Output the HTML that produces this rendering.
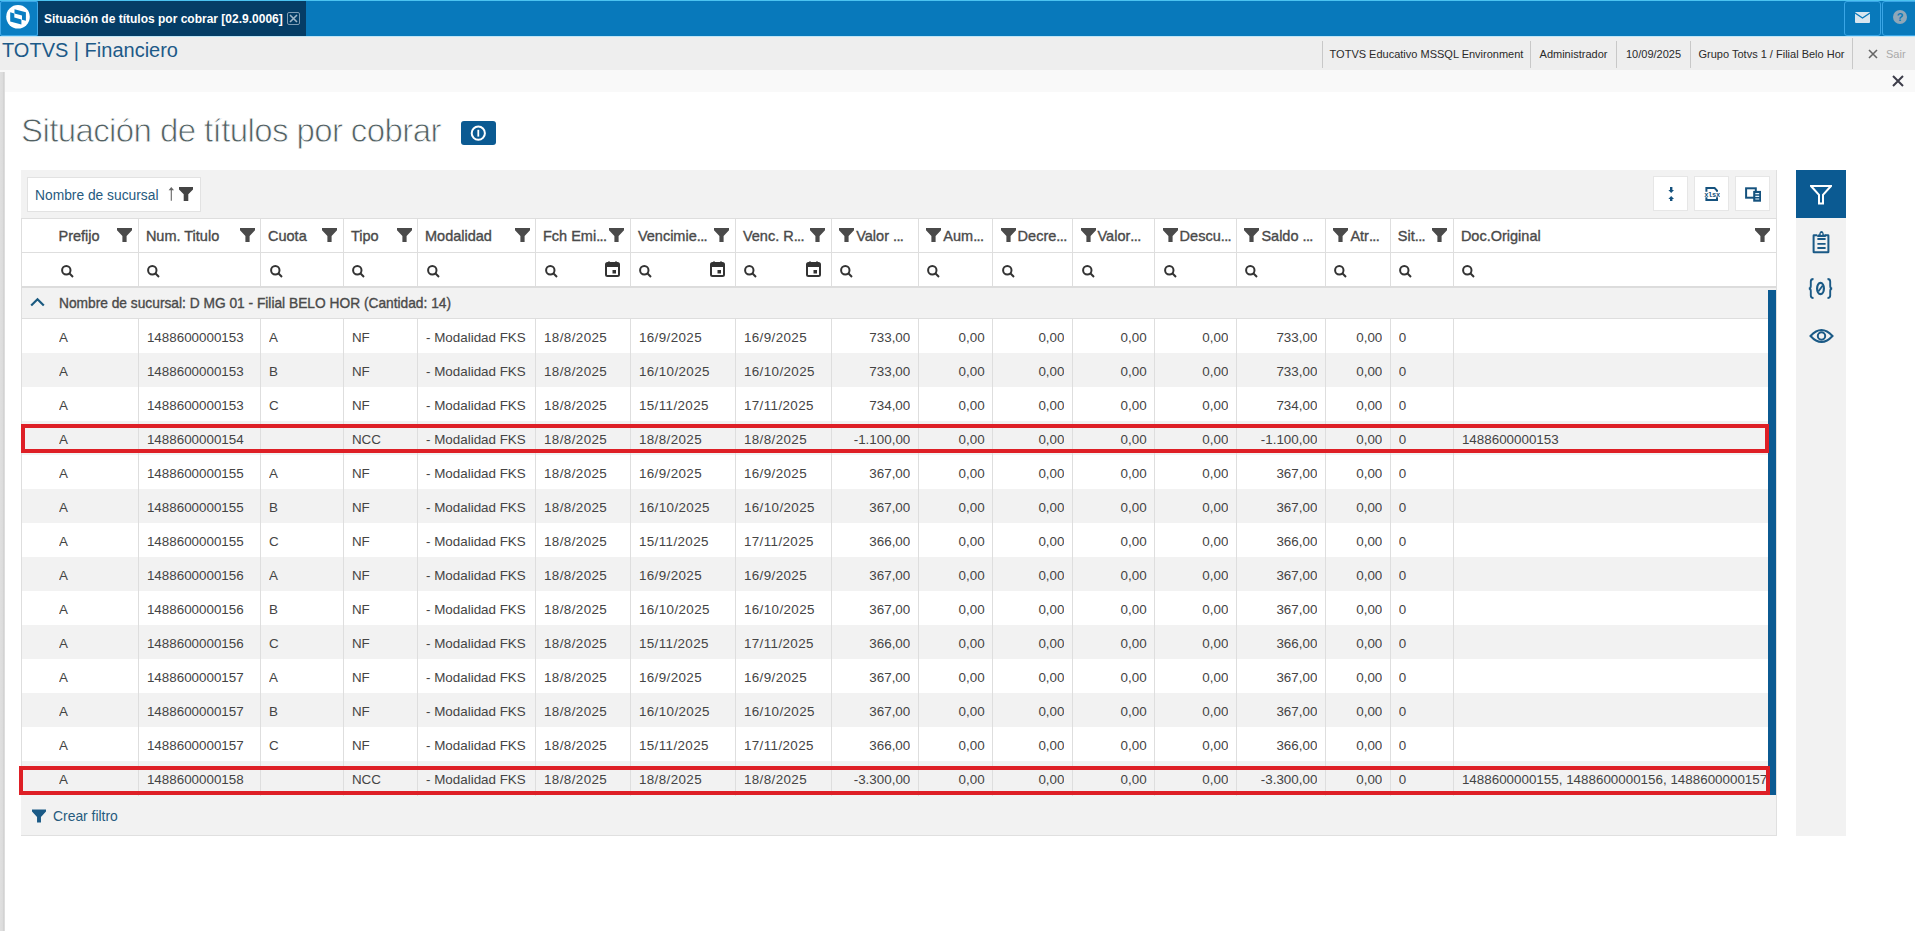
<!DOCTYPE html>
<html><head><meta charset="utf-8"><title>Situación de títulos por cobrar</title>
<style>
*{box-sizing:border-box;margin:0;padding:0}
html,body{width:1915px;height:931px;overflow:hidden;background:#fff;font-family:"Liberation Sans", sans-serif;color:#333}
.a{position:absolute}
.t{position:absolute;white-space:nowrap}
.cell{position:absolute;height:34px;line-height:37px;font-size:13.4px;color:#444;white-space:nowrap;overflow:hidden}
.hd{position:absolute;top:220px;height:33px;line-height:33px;font-size:14.5px;color:#4a4a4a;-webkit-text-stroke:0.35px #4a4a4a;white-space:nowrap}
.dots{letter-spacing:-0.6px}
.vl{position:absolute;width:1px;background:#dedede}
</style></head><body>

<div class="a" style="left:0;top:0;width:1915px;height:37px;background:#0879bb;border-top:1px solid #4cc3f0"></div>
<div class="a" style="left:0;top:1px;width:38px;height:35px;background:#0a7ec2;border:1px solid #3ea7e6;border-radius:2px"></div>
<svg class="a" style="left:0;top:0" width="38" height="37" viewBox="0 0 38 37"><circle cx="18" cy="16.8" r="11.8" fill="#fff"/><path d="M14.5 9.2L25.9 12.2L25.9 20.8L22 19.8L22 15.5L14.5 13.5Z" fill="#0a7ec2"/><path d="M10.2 12.3L14.3 13.4L14.3 17.6L21.4 19.5L21.4 24.5L10.2 21.6Z" fill="#0a7ec2"/></svg>
<div class="a" style="left:38px;top:1px;width:268px;height:36px;background:#053d66"></div>
<div class="t" style="left:44px;top:11px;font-size:12px;font-weight:bold;color:#fff;line-height:17px">Situación de títulos por cobrar [02.9.0006]</div>
<div class="a" style="left:287px;top:12px;width:13px;height:13px;border:1px solid #7f9db5;border-radius:2px"></div>
<svg class="a" style="left:289px;top:14px" width="9" height="9" viewBox="0 0 9 9"><path d="M1 1L8 8M8 1L1 8" stroke="#9fb6c8" stroke-width="1.6"/></svg>
<div class="a" style="left:0;top:36px;width:1915px;height:1px;background:#bfe6f7"></div>
<div class="a" style="left:1844px;top:1px;width:37px;height:35px;border:1px solid #3aa6e6;border-radius:3px"></div>
<div class="a" style="left:1882px;top:1px;width:40px;height:35px;border:1px solid #3aa6e6;border-radius:3px"></div>
<svg class="a" style="left:1855px;top:12px" width="15" height="11" viewBox="0 0 15 11"><rect x="0" y="0" width="15" height="11" rx="1" fill="#d9e6ef"/><path d="M0 1L7.5 6L15 1" fill="none" stroke="#0879bb" stroke-width="1.4"/></svg>
<div class="a" style="left:1893px;top:10px;width:14px;height:14px;border-radius:50%;background:#8fa7b8;color:#0879bb;font-size:11px;font-weight:bold;line-height:14px;text-align:center">?</div>
<div class="a" style="left:0;top:37px;width:1915px;height:33px;background:#eeeeee"></div>
<div class="t" style="left:2px;top:38px;font-size:20px;color:#1d5a88;line-height:24px">TOTVS | Financiero</div>
<div class="a" style="left:1322px;top:41px;width:1px;height:27px;background:#c8c8c8"></div>
<div class="t" style="left:1323px;top:46px;width:207px;text-align:center;font-size:11px;color:#2a2a2a;line-height:16px">TOTVS Educativo MSSQL Environment</div>
<div class="a" style="left:1530px;top:41px;width:1px;height:27px;background:#c8c8c8"></div>
<div class="t" style="left:1531px;top:46px;width:85px;text-align:center;font-size:11px;color:#2a2a2a;line-height:16px">Administrador</div>
<div class="a" style="left:1616px;top:41px;width:1px;height:27px;background:#c8c8c8"></div>
<div class="t" style="left:1617px;top:46px;width:73px;text-align:center;font-size:11px;color:#2a2a2a;line-height:16px">10/09/2025</div>
<div class="a" style="left:1690px;top:41px;width:1px;height:27px;background:#c8c8c8"></div>
<div class="t" style="left:1691px;top:46px;width:161px;text-align:center;font-size:11px;color:#2a2a2a;line-height:16px">Grupo Totvs 1 / Filial Belo Hor</div>
<div class="a" style="left:1852px;top:38px;width:1px;height:31px;background:#c8c8c8"></div>
<svg class="a" style="left:1868px;top:49px" width="10" height="10" viewBox="0 0 10 10"><path d="M1 1L9 9M9 1L1 9" stroke="#666" stroke-width="1.6"/></svg>
<div class="t" style="left:1886px;top:46px;font-size:11px;color:#aaa;line-height:16px">Sair</div>
<div class="a" style="left:0;top:70px;width:1915px;height:22px;background:#f9f9f9"></div>
<div class="a" style="left:0;top:72px;width:5px;height:859px;background:linear-gradient(to right,#e0e0e0 0,#dcdcdc 50%,#cecece 80%,#ececec 100%)"></div>
<svg class="a" style="left:1892px;top:75px" width="12" height="12" viewBox="0 0 12 12"><path d="M1 1L11 11M11 1L1 11" stroke="#3d3d4a" stroke-width="2"/></svg>
<div class="t" style="left:21px;top:111px;font-size:33px;color:#526163;line-height:40px;letter-spacing:-0.6px;-webkit-text-stroke:0.8px #fff">Situación de títulos por cobrar</div>
<div class="a" style="left:461px;top:121px;width:35px;height:24px;background:#0b5a92;border-radius:3px"></div>
<svg class="a" style="left:470px;top:125px" width="17" height="17" viewBox="0 0 17 17"><circle cx="8.3" cy="8.2" r="6.6" fill="none" stroke="#fff" stroke-width="2"/><rect x="7.4" y="4.8" width="1.8" height="6.8" fill="#fff"/></svg>
<div class="a" style="left:21px;top:170px;width:1756px;height:666px;background:#f2f2f2;border-right:1px solid #e0e0e0;border-bottom:1px solid #e0e0e0"></div>
<div class="a" style="left:27px;top:177px;width:174px;height:35px;background:#fff;border:1px solid #e2e2e2"></div>
<div class="t" style="left:35px;top:187px;font-size:13.8px;color:#265a7e;line-height:18px">Nombre de sucursal</div>
<svg class="a" style="left:167px;top:187px" width="8" height="14" viewBox="0 0 8 14"><path d="M4.3 13.8V2.5" stroke="#666" stroke-width="1.1"/><path d="M4.3 0L7 3.3H1.6Z" fill="#666"/></svg>
<svg class="a" style="left:179px;top:187px" width="14" height="14" viewBox="0 0 14 14"><path d="M0 0H14V2.6L9.3 7.2V14H4.7V7.2L0 2.6Z" fill="#444"/></svg>
<div class="a" style="left:1653px;top:176px;width:35px;height:35px;background:#fff;border:1px solid #e6e6e6"></div>
<div class="a" style="left:1694px;top:176px;width:35px;height:35px;background:#fff;border:1px solid #e6e6e6"></div>
<div class="a" style="left:1735px;top:176px;width:35px;height:35px;background:#fff;border:1px solid #e6e6e6"></div>
<svg class="a" style="left:1665px;top:186px" width="12" height="16" viewBox="0 0 12 16"><rect x="5" y="1" width="2.4" height="3.2" fill="#15527e"/><path d="M3.4 4H9L6.2 7Z" fill="#15527e"/><path d="M3.4 13H9L6.2 10Z" fill="#15527e"/><rect x="5" y="12.8" width="2.4" height="2.2" fill="#15527e"/></svg>
<svg class="a" style="left:1704px;top:186px" width="16" height="16" viewBox="0 0 16 16"><path d="M2.4 5.8V2H10.6L13 4.6V5.8" fill="none" stroke="#15527e" stroke-width="2"/><path d="M2.4 11.2V14H13V11.2" fill="none" stroke="#15527e" stroke-width="2"/><text x="8" y="10.8" font-size="7" font-weight="bold" text-anchor="middle" fill="#15527e" font-family="Liberation Mono" letter-spacing="-0.3">xlsx</text></svg>
<svg class="a" style="left:1744px;top:186px" width="18" height="17" viewBox="0 0 18 17"><rect x="2.1" y="2.3" width="9.7" height="9.4" fill="none" stroke="#15527e" stroke-width="2"/><rect x="9.2" y="4.9" width="7.8" height="10.8" fill="#15527e"/><path d="M11.3 7.6H15.2M11.3 10.3H15.2M11.3 13H15.2" stroke="#e8f6ff" stroke-width="1.2"/></svg>
<div class="a" style="left:21px;top:218px;width:1756px;height:70px;background:#fff;border:1px solid #dedede;border-bottom:2px solid #dcdcdc"></div>
<div class="a" style="left:22px;top:252px;width:1754px;height:1px;background:#dedede"></div>
<div class="vl" style="left:138px;top:219px;height:67px"></div>
<div class="vl" style="left:260px;top:219px;height:67px"></div>
<div class="vl" style="left:343px;top:219px;height:67px"></div>
<div class="vl" style="left:417px;top:219px;height:67px"></div>
<div class="vl" style="left:535px;top:219px;height:67px"></div>
<div class="vl" style="left:630px;top:219px;height:67px"></div>
<div class="vl" style="left:735px;top:219px;height:67px"></div>
<div class="vl" style="left:831px;top:219px;height:67px"></div>
<div class="vl" style="left:918px;top:219px;height:67px"></div>
<div class="vl" style="left:992px;top:219px;height:67px"></div>
<div class="vl" style="left:1072px;top:219px;height:67px"></div>
<div class="vl" style="left:1154px;top:219px;height:67px"></div>
<div class="vl" style="left:1236px;top:219px;height:67px"></div>
<div class="vl" style="left:1325px;top:219px;height:67px"></div>
<div class="vl" style="left:1390px;top:219px;height:67px"></div>
<div class="vl" style="left:1453px;top:219px;height:67px"></div>
<div class="hd" style="left:58.5px">Prefijo</div>
<div class="a" style="left:117.4px;top:228px"><svg class="fun" width="15" height="14" viewBox="0 0 15 14"><path d="M0 0H15V2.2L9.6 8V14H5.4V8L0 2.2Z" fill="#4a4a4a"/></svg></div>
<div class="hd" style="left:145.9px">Num. Titulo</div>
<div class="a" style="left:239.5px;top:228px"><svg class="fun" width="15" height="14" viewBox="0 0 15 14"><path d="M0 0H15V2.2L9.6 8V14H5.4V8L0 2.2Z" fill="#4a4a4a"/></svg></div>
<div class="hd" style="left:268.0px">Cuota</div>
<div class="a" style="left:322.4px;top:228px"><svg class="fun" width="15" height="14" viewBox="0 0 15 14"><path d="M0 0H15V2.2L9.6 8V14H5.4V8L0 2.2Z" fill="#4a4a4a"/></svg></div>
<div class="hd" style="left:350.9px">Tipo</div>
<div class="a" style="left:396.5px;top:228px"><svg class="fun" width="15" height="14" viewBox="0 0 15 14"><path d="M0 0H15V2.2L9.6 8V14H5.4V8L0 2.2Z" fill="#4a4a4a"/></svg></div>
<div class="hd" style="left:425.0px">Modalidad</div>
<div class="a" style="left:514.5px;top:228px"><svg class="fun" width="15" height="14" viewBox="0 0 15 14"><path d="M0 0H15V2.2L9.6 8V14H5.4V8L0 2.2Z" fill="#4a4a4a"/></svg></div>
<div class="hd" style="left:543.0px">Fch Emi<span class="dots">...</span></div>
<div class="a" style="left:609.4px;top:228px"><svg class="fun" width="15" height="14" viewBox="0 0 15 14"><path d="M0 0H15V2.2L9.6 8V14H5.4V8L0 2.2Z" fill="#4a4a4a"/></svg></div>
<div class="hd" style="left:637.9px">Vencimie<span class="dots">...</span></div>
<div class="a" style="left:714.4px;top:228px"><svg class="fun" width="15" height="14" viewBox="0 0 15 14"><path d="M0 0H15V2.2L9.6 8V14H5.4V8L0 2.2Z" fill="#4a4a4a"/></svg></div>
<div class="hd" style="left:742.9px">Venc. R<span class="dots">...</span></div>
<div class="a" style="left:810.2px;top:228px"><svg class="fun" width="15" height="14" viewBox="0 0 15 14"><path d="M0 0H15V2.2L9.6 8V14H5.4V8L0 2.2Z" fill="#4a4a4a"/></svg></div>
<div class="a" style="left:839.2px;top:228px"><svg class="fun" width="15" height="14" viewBox="0 0 15 14"><path d="M0 0H15V2.2L9.6 8V14H5.4V8L0 2.2Z" fill="#4a4a4a"/></svg></div>
<div class="hd" style="left:856.2px">Valor <span class="dots">...</span></div>
<div class="a" style="left:926.3px;top:228px"><svg class="fun" width="15" height="14" viewBox="0 0 15 14"><path d="M0 0H15V2.2L9.6 8V14H5.4V8L0 2.2Z" fill="#4a4a4a"/></svg></div>
<div class="hd" style="left:943.3px">Aum<span class="dots">...</span></div>
<div class="a" style="left:1000.6px;top:228px"><svg class="fun" width="15" height="14" viewBox="0 0 15 14"><path d="M0 0H15V2.2L9.6 8V14H5.4V8L0 2.2Z" fill="#4a4a4a"/></svg></div>
<div class="hd" style="left:1017.6px">Decre<span class="dots">...</span></div>
<div class="a" style="left:1080.5px;top:228px"><svg class="fun" width="15" height="14" viewBox="0 0 15 14"><path d="M0 0H15V2.2L9.6 8V14H5.4V8L0 2.2Z" fill="#4a4a4a"/></svg></div>
<div class="hd" style="left:1097.5px">Valor<span class="dots">...</span></div>
<div class="a" style="left:1162.6px;top:228px"><svg class="fun" width="15" height="14" viewBox="0 0 15 14"><path d="M0 0H15V2.2L9.6 8V14H5.4V8L0 2.2Z" fill="#4a4a4a"/></svg></div>
<div class="hd" style="left:1179.6px">Descu<span class="dots">...</span></div>
<div class="a" style="left:1244.4px;top:228px"><svg class="fun" width="15" height="14" viewBox="0 0 15 14"><path d="M0 0H15V2.2L9.6 8V14H5.4V8L0 2.2Z" fill="#4a4a4a"/></svg></div>
<div class="hd" style="left:1261.4px">Saldo <span class="dots">...</span></div>
<div class="a" style="left:1333.4px;top:228px"><svg class="fun" width="15" height="14" viewBox="0 0 15 14"><path d="M0 0H15V2.2L9.6 8V14H5.4V8L0 2.2Z" fill="#4a4a4a"/></svg></div>
<div class="hd" style="left:1350.4px">Atr<span class="dots">...</span></div>
<div class="hd" style="left:1397.8px">Sit<span class="dots">...</span></div>
<div class="a" style="left:1432.4px;top:228px"><svg class="fun" width="15" height="14" viewBox="0 0 15 14"><path d="M0 0H15V2.2L9.6 8V14H5.4V8L0 2.2Z" fill="#4a4a4a"/></svg></div>
<div class="hd" style="left:1460.9px">Doc.Original</div>
<div class="a" style="left:1755px;top:228px"><svg class="fun" width="15" height="14" viewBox="0 0 15 14"><path d="M0 0H15V2.2L9.6 8V14H5.4V8L0 2.2Z" fill="#4a4a4a"/></svg></div>
<div class="a" style="left:61px;top:264px;height:13px"><svg width="13" height="13" viewBox="0 0 13 13"><circle cx="5.3" cy="5.3" r="4.2" fill="none" stroke="#333" stroke-width="2"/><path d="M8.3 8.3L12 12" stroke="#333" stroke-width="2"/></svg></div>
<div class="a" style="left:147.4px;top:264px;height:13px"><svg width="13" height="13" viewBox="0 0 13 13"><circle cx="5.3" cy="5.3" r="4.2" fill="none" stroke="#333" stroke-width="2"/><path d="M8.3 8.3L12 12" stroke="#333" stroke-width="2"/></svg></div>
<div class="a" style="left:269.5px;top:264px;height:13px"><svg width="13" height="13" viewBox="0 0 13 13"><circle cx="5.3" cy="5.3" r="4.2" fill="none" stroke="#333" stroke-width="2"/><path d="M8.3 8.3L12 12" stroke="#333" stroke-width="2"/></svg></div>
<div class="a" style="left:352.4px;top:264px;height:13px"><svg width="13" height="13" viewBox="0 0 13 13"><circle cx="5.3" cy="5.3" r="4.2" fill="none" stroke="#333" stroke-width="2"/><path d="M8.3 8.3L12 12" stroke="#333" stroke-width="2"/></svg></div>
<div class="a" style="left:426.5px;top:264px;height:13px"><svg width="13" height="13" viewBox="0 0 13 13"><circle cx="5.3" cy="5.3" r="4.2" fill="none" stroke="#333" stroke-width="2"/><path d="M8.3 8.3L12 12" stroke="#333" stroke-width="2"/></svg></div>
<div class="a" style="left:544.5px;top:264px;height:13px"><svg width="13" height="13" viewBox="0 0 13 13"><circle cx="5.3" cy="5.3" r="4.2" fill="none" stroke="#333" stroke-width="2"/><path d="M8.3 8.3L12 12" stroke="#333" stroke-width="2"/></svg></div>
<div class="a" style="left:639.4px;top:264px;height:13px"><svg width="13" height="13" viewBox="0 0 13 13"><circle cx="5.3" cy="5.3" r="4.2" fill="none" stroke="#333" stroke-width="2"/><path d="M8.3 8.3L12 12" stroke="#333" stroke-width="2"/></svg></div>
<div class="a" style="left:744.4px;top:264px;height:13px"><svg width="13" height="13" viewBox="0 0 13 13"><circle cx="5.3" cy="5.3" r="4.2" fill="none" stroke="#333" stroke-width="2"/><path d="M8.3 8.3L12 12" stroke="#333" stroke-width="2"/></svg></div>
<div class="a" style="left:840.2px;top:264px;height:13px"><svg width="13" height="13" viewBox="0 0 13 13"><circle cx="5.3" cy="5.3" r="4.2" fill="none" stroke="#333" stroke-width="2"/><path d="M8.3 8.3L12 12" stroke="#333" stroke-width="2"/></svg></div>
<div class="a" style="left:927.3px;top:264px;height:13px"><svg width="13" height="13" viewBox="0 0 13 13"><circle cx="5.3" cy="5.3" r="4.2" fill="none" stroke="#333" stroke-width="2"/><path d="M8.3 8.3L12 12" stroke="#333" stroke-width="2"/></svg></div>
<div class="a" style="left:1001.6px;top:264px;height:13px"><svg width="13" height="13" viewBox="0 0 13 13"><circle cx="5.3" cy="5.3" r="4.2" fill="none" stroke="#333" stroke-width="2"/><path d="M8.3 8.3L12 12" stroke="#333" stroke-width="2"/></svg></div>
<div class="a" style="left:1081.5px;top:264px;height:13px"><svg width="13" height="13" viewBox="0 0 13 13"><circle cx="5.3" cy="5.3" r="4.2" fill="none" stroke="#333" stroke-width="2"/><path d="M8.3 8.3L12 12" stroke="#333" stroke-width="2"/></svg></div>
<div class="a" style="left:1163.6px;top:264px;height:13px"><svg width="13" height="13" viewBox="0 0 13 13"><circle cx="5.3" cy="5.3" r="4.2" fill="none" stroke="#333" stroke-width="2"/><path d="M8.3 8.3L12 12" stroke="#333" stroke-width="2"/></svg></div>
<div class="a" style="left:1245.4px;top:264px;height:13px"><svg width="13" height="13" viewBox="0 0 13 13"><circle cx="5.3" cy="5.3" r="4.2" fill="none" stroke="#333" stroke-width="2"/><path d="M8.3 8.3L12 12" stroke="#333" stroke-width="2"/></svg></div>
<div class="a" style="left:1334.4px;top:264px;height:13px"><svg width="13" height="13" viewBox="0 0 13 13"><circle cx="5.3" cy="5.3" r="4.2" fill="none" stroke="#333" stroke-width="2"/><path d="M8.3 8.3L12 12" stroke="#333" stroke-width="2"/></svg></div>
<div class="a" style="left:1399.3px;top:264px;height:13px"><svg width="13" height="13" viewBox="0 0 13 13"><circle cx="5.3" cy="5.3" r="4.2" fill="none" stroke="#333" stroke-width="2"/><path d="M8.3 8.3L12 12" stroke="#333" stroke-width="2"/></svg></div>
<div class="a" style="left:1462.4px;top:264px;height:13px"><svg width="13" height="13" viewBox="0 0 13 13"><circle cx="5.3" cy="5.3" r="4.2" fill="none" stroke="#333" stroke-width="2"/><path d="M8.3 8.3L12 12" stroke="#333" stroke-width="2"/></svg></div>
<div class="a" style="left:605.4px;top:261px;height:16px"><svg width="15" height="16" viewBox="0 0 15 16"><path d="M1 3.5Q1 2 2.5 2H12.5Q14 2 14 3.5V13.5Q14 15 12.5 15H2.5Q1 15 1 13.5Z" fill="none" stroke="#333" stroke-width="2"/><rect x="1" y="2" width="13" height="4" fill="#333"/><rect x="3" y="0.5" width="2" height="2" fill="#333"/><rect x="10" y="0.5" width="2" height="2" fill="#333"/><rect x="7.5" y="9" width="3.5" height="3.5" fill="#333"/></svg></div>
<div class="a" style="left:710.4px;top:261px;height:16px"><svg width="15" height="16" viewBox="0 0 15 16"><path d="M1 3.5Q1 2 2.5 2H12.5Q14 2 14 3.5V13.5Q14 15 12.5 15H2.5Q1 15 1 13.5Z" fill="none" stroke="#333" stroke-width="2"/><rect x="1" y="2" width="13" height="4" fill="#333"/><rect x="3" y="0.5" width="2" height="2" fill="#333"/><rect x="10" y="0.5" width="2" height="2" fill="#333"/><rect x="7.5" y="9" width="3.5" height="3.5" fill="#333"/></svg></div>
<div class="a" style="left:806.2px;top:261px;height:16px"><svg width="15" height="16" viewBox="0 0 15 16"><path d="M1 3.5Q1 2 2.5 2H12.5Q14 2 14 3.5V13.5Q14 15 12.5 15H2.5Q1 15 1 13.5Z" fill="none" stroke="#333" stroke-width="2"/><rect x="1" y="2" width="13" height="4" fill="#333"/><rect x="3" y="0.5" width="2" height="2" fill="#333"/><rect x="10" y="0.5" width="2" height="2" fill="#333"/><rect x="7.5" y="9" width="3.5" height="3.5" fill="#333"/></svg></div>
<div class="a" style="left:21px;top:288px;width:1747px;height:31px;background:#f2f2f2;border-left:1px solid #dedede;border-bottom:1px solid #dedede"></div>
<svg class="a" style="left:30px;top:297px" width="15" height="10" viewBox="0 0 15 10"><path d="M1.2 8.5L7.5 2.2L13.8 8.5" fill="none" stroke="#1a5a80" stroke-width="2.2"/></svg>
<div class="t" style="left:59px;top:295px;font-size:13.75px;color:#4a4a4a;-webkit-text-stroke:0.35px #4a4a4a;line-height:18px">Nombre de sucursal: D MG 01 - Filial BELO HOR (Cantidad: 14)</div>
<div class="a" style="left:21px;top:319px;width:1747px;height:34px;background:#ffffff;border-left:1px solid #dedede"></div>
<div class="cell" style="left:59px;top:319px;width:79.4px">A</div>
<div class="cell" style="left:146.9px;top:319px;width:113.6px">1488600000153</div>
<div class="cell" style="left:269.0px;top:319px;width:74.4px">A</div>
<div class="cell" style="left:351.9px;top:319px;width:65.6px">NF</div>
<div class="cell" style="left:426.0px;top:319px;width:109.5px">- Modalidad FKS</div>
<div class="cell" style="left:544.0px;top:319px;width:86.4px;letter-spacing:0.4px">18/8/2025</div>
<div class="cell" style="left:638.9px;top:319px;width:96.5px;letter-spacing:0.4px">16/9/2025</div>
<div class="cell" style="left:743.9px;top:319px;width:87.3px;letter-spacing:0.4px">16/9/2025</div>
<div class="cell" style="left:831.2px;top:319px;width:79.09999999999991px;text-align:right">733,00</div>
<div class="cell" style="left:918.3px;top:319px;width:66.30000000000007px;text-align:right">0,00</div>
<div class="cell" style="left:992.6px;top:319px;width:71.89999999999998px;text-align:right">0,00</div>
<div class="cell" style="left:1072.5px;top:319px;width:74.09999999999991px;text-align:right">0,00</div>
<div class="cell" style="left:1154.6px;top:319px;width:73.80000000000018px;text-align:right">0,00</div>
<div class="cell" style="left:1236.4px;top:319px;width:81.0px;text-align:right">733,00</div>
<div class="cell" style="left:1325.4px;top:319px;width:56.899999999999864px;text-align:right">0,00</div>
<div class="cell" style="left:1398.8px;top:319px;width:54.6px">0</div>
<div class="a" style="left:21px;top:353px;width:1747px;height:34px;background:#f2f2f2;border-left:1px solid #dedede"></div>
<div class="cell" style="left:59px;top:353px;width:79.4px">A</div>
<div class="cell" style="left:146.9px;top:353px;width:113.6px">1488600000153</div>
<div class="cell" style="left:269.0px;top:353px;width:74.4px">B</div>
<div class="cell" style="left:351.9px;top:353px;width:65.6px">NF</div>
<div class="cell" style="left:426.0px;top:353px;width:109.5px">- Modalidad FKS</div>
<div class="cell" style="left:544.0px;top:353px;width:86.4px;letter-spacing:0.4px">18/8/2025</div>
<div class="cell" style="left:638.9px;top:353px;width:96.5px;letter-spacing:0.4px">16/10/2025</div>
<div class="cell" style="left:743.9px;top:353px;width:87.3px;letter-spacing:0.4px">16/10/2025</div>
<div class="cell" style="left:831.2px;top:353px;width:79.09999999999991px;text-align:right">733,00</div>
<div class="cell" style="left:918.3px;top:353px;width:66.30000000000007px;text-align:right">0,00</div>
<div class="cell" style="left:992.6px;top:353px;width:71.89999999999998px;text-align:right">0,00</div>
<div class="cell" style="left:1072.5px;top:353px;width:74.09999999999991px;text-align:right">0,00</div>
<div class="cell" style="left:1154.6px;top:353px;width:73.80000000000018px;text-align:right">0,00</div>
<div class="cell" style="left:1236.4px;top:353px;width:81.0px;text-align:right">733,00</div>
<div class="cell" style="left:1325.4px;top:353px;width:56.899999999999864px;text-align:right">0,00</div>
<div class="cell" style="left:1398.8px;top:353px;width:54.6px">0</div>
<div class="a" style="left:21px;top:387px;width:1747px;height:34px;background:#ffffff;border-left:1px solid #dedede"></div>
<div class="cell" style="left:59px;top:387px;width:79.4px">A</div>
<div class="cell" style="left:146.9px;top:387px;width:113.6px">1488600000153</div>
<div class="cell" style="left:269.0px;top:387px;width:74.4px">C</div>
<div class="cell" style="left:351.9px;top:387px;width:65.6px">NF</div>
<div class="cell" style="left:426.0px;top:387px;width:109.5px">- Modalidad FKS</div>
<div class="cell" style="left:544.0px;top:387px;width:86.4px;letter-spacing:0.4px">18/8/2025</div>
<div class="cell" style="left:638.9px;top:387px;width:96.5px;letter-spacing:0.4px">15/11/2025</div>
<div class="cell" style="left:743.9px;top:387px;width:87.3px;letter-spacing:0.4px">17/11/2025</div>
<div class="cell" style="left:831.2px;top:387px;width:79.09999999999991px;text-align:right">734,00</div>
<div class="cell" style="left:918.3px;top:387px;width:66.30000000000007px;text-align:right">0,00</div>
<div class="cell" style="left:992.6px;top:387px;width:71.89999999999998px;text-align:right">0,00</div>
<div class="cell" style="left:1072.5px;top:387px;width:74.09999999999991px;text-align:right">0,00</div>
<div class="cell" style="left:1154.6px;top:387px;width:73.80000000000018px;text-align:right">0,00</div>
<div class="cell" style="left:1236.4px;top:387px;width:81.0px;text-align:right">734,00</div>
<div class="cell" style="left:1325.4px;top:387px;width:56.899999999999864px;text-align:right">0,00</div>
<div class="cell" style="left:1398.8px;top:387px;width:54.6px">0</div>
<div class="a" style="left:21px;top:421px;width:1747px;height:34px;background:#f2f2f2;border-left:1px solid #dedede"></div>
<div class="cell" style="left:59px;top:421px;width:79.4px">A</div>
<div class="cell" style="left:146.9px;top:421px;width:113.6px">1488600000154</div>
<div class="cell" style="left:351.9px;top:421px;width:65.6px">NCC</div>
<div class="cell" style="left:426.0px;top:421px;width:109.5px">- Modalidad FKS</div>
<div class="cell" style="left:544.0px;top:421px;width:86.4px;letter-spacing:0.4px">18/8/2025</div>
<div class="cell" style="left:638.9px;top:421px;width:96.5px;letter-spacing:0.4px">18/8/2025</div>
<div class="cell" style="left:743.9px;top:421px;width:87.3px;letter-spacing:0.4px">18/8/2025</div>
<div class="cell" style="left:831.2px;top:421px;width:79.09999999999991px;text-align:right">-1.100,00</div>
<div class="cell" style="left:918.3px;top:421px;width:66.30000000000007px;text-align:right">0,00</div>
<div class="cell" style="left:992.6px;top:421px;width:71.89999999999998px;text-align:right">0,00</div>
<div class="cell" style="left:1072.5px;top:421px;width:74.09999999999991px;text-align:right">0,00</div>
<div class="cell" style="left:1154.6px;top:421px;width:73.80000000000018px;text-align:right">0,00</div>
<div class="cell" style="left:1236.4px;top:421px;width:81.0px;text-align:right">-1.100,00</div>
<div class="cell" style="left:1325.4px;top:421px;width:56.899999999999864px;text-align:right">0,00</div>
<div class="cell" style="left:1398.8px;top:421px;width:54.6px">0</div>
<div class="cell" style="left:1461.9px;top:421px;width:304.1px">1488600000153</div>
<div class="a" style="left:21px;top:455px;width:1747px;height:34px;background:#ffffff;border-left:1px solid #dedede"></div>
<div class="cell" style="left:59px;top:455px;width:79.4px">A</div>
<div class="cell" style="left:146.9px;top:455px;width:113.6px">1488600000155</div>
<div class="cell" style="left:269.0px;top:455px;width:74.4px">A</div>
<div class="cell" style="left:351.9px;top:455px;width:65.6px">NF</div>
<div class="cell" style="left:426.0px;top:455px;width:109.5px">- Modalidad FKS</div>
<div class="cell" style="left:544.0px;top:455px;width:86.4px;letter-spacing:0.4px">18/8/2025</div>
<div class="cell" style="left:638.9px;top:455px;width:96.5px;letter-spacing:0.4px">16/9/2025</div>
<div class="cell" style="left:743.9px;top:455px;width:87.3px;letter-spacing:0.4px">16/9/2025</div>
<div class="cell" style="left:831.2px;top:455px;width:79.09999999999991px;text-align:right">367,00</div>
<div class="cell" style="left:918.3px;top:455px;width:66.30000000000007px;text-align:right">0,00</div>
<div class="cell" style="left:992.6px;top:455px;width:71.89999999999998px;text-align:right">0,00</div>
<div class="cell" style="left:1072.5px;top:455px;width:74.09999999999991px;text-align:right">0,00</div>
<div class="cell" style="left:1154.6px;top:455px;width:73.80000000000018px;text-align:right">0,00</div>
<div class="cell" style="left:1236.4px;top:455px;width:81.0px;text-align:right">367,00</div>
<div class="cell" style="left:1325.4px;top:455px;width:56.899999999999864px;text-align:right">0,00</div>
<div class="cell" style="left:1398.8px;top:455px;width:54.6px">0</div>
<div class="a" style="left:21px;top:489px;width:1747px;height:34px;background:#f2f2f2;border-left:1px solid #dedede"></div>
<div class="cell" style="left:59px;top:489px;width:79.4px">A</div>
<div class="cell" style="left:146.9px;top:489px;width:113.6px">1488600000155</div>
<div class="cell" style="left:269.0px;top:489px;width:74.4px">B</div>
<div class="cell" style="left:351.9px;top:489px;width:65.6px">NF</div>
<div class="cell" style="left:426.0px;top:489px;width:109.5px">- Modalidad FKS</div>
<div class="cell" style="left:544.0px;top:489px;width:86.4px;letter-spacing:0.4px">18/8/2025</div>
<div class="cell" style="left:638.9px;top:489px;width:96.5px;letter-spacing:0.4px">16/10/2025</div>
<div class="cell" style="left:743.9px;top:489px;width:87.3px;letter-spacing:0.4px">16/10/2025</div>
<div class="cell" style="left:831.2px;top:489px;width:79.09999999999991px;text-align:right">367,00</div>
<div class="cell" style="left:918.3px;top:489px;width:66.30000000000007px;text-align:right">0,00</div>
<div class="cell" style="left:992.6px;top:489px;width:71.89999999999998px;text-align:right">0,00</div>
<div class="cell" style="left:1072.5px;top:489px;width:74.09999999999991px;text-align:right">0,00</div>
<div class="cell" style="left:1154.6px;top:489px;width:73.80000000000018px;text-align:right">0,00</div>
<div class="cell" style="left:1236.4px;top:489px;width:81.0px;text-align:right">367,00</div>
<div class="cell" style="left:1325.4px;top:489px;width:56.899999999999864px;text-align:right">0,00</div>
<div class="cell" style="left:1398.8px;top:489px;width:54.6px">0</div>
<div class="a" style="left:21px;top:523px;width:1747px;height:34px;background:#ffffff;border-left:1px solid #dedede"></div>
<div class="cell" style="left:59px;top:523px;width:79.4px">A</div>
<div class="cell" style="left:146.9px;top:523px;width:113.6px">1488600000155</div>
<div class="cell" style="left:269.0px;top:523px;width:74.4px">C</div>
<div class="cell" style="left:351.9px;top:523px;width:65.6px">NF</div>
<div class="cell" style="left:426.0px;top:523px;width:109.5px">- Modalidad FKS</div>
<div class="cell" style="left:544.0px;top:523px;width:86.4px;letter-spacing:0.4px">18/8/2025</div>
<div class="cell" style="left:638.9px;top:523px;width:96.5px;letter-spacing:0.4px">15/11/2025</div>
<div class="cell" style="left:743.9px;top:523px;width:87.3px;letter-spacing:0.4px">17/11/2025</div>
<div class="cell" style="left:831.2px;top:523px;width:79.09999999999991px;text-align:right">366,00</div>
<div class="cell" style="left:918.3px;top:523px;width:66.30000000000007px;text-align:right">0,00</div>
<div class="cell" style="left:992.6px;top:523px;width:71.89999999999998px;text-align:right">0,00</div>
<div class="cell" style="left:1072.5px;top:523px;width:74.09999999999991px;text-align:right">0,00</div>
<div class="cell" style="left:1154.6px;top:523px;width:73.80000000000018px;text-align:right">0,00</div>
<div class="cell" style="left:1236.4px;top:523px;width:81.0px;text-align:right">366,00</div>
<div class="cell" style="left:1325.4px;top:523px;width:56.899999999999864px;text-align:right">0,00</div>
<div class="cell" style="left:1398.8px;top:523px;width:54.6px">0</div>
<div class="a" style="left:21px;top:557px;width:1747px;height:34px;background:#f2f2f2;border-left:1px solid #dedede"></div>
<div class="cell" style="left:59px;top:557px;width:79.4px">A</div>
<div class="cell" style="left:146.9px;top:557px;width:113.6px">1488600000156</div>
<div class="cell" style="left:269.0px;top:557px;width:74.4px">A</div>
<div class="cell" style="left:351.9px;top:557px;width:65.6px">NF</div>
<div class="cell" style="left:426.0px;top:557px;width:109.5px">- Modalidad FKS</div>
<div class="cell" style="left:544.0px;top:557px;width:86.4px;letter-spacing:0.4px">18/8/2025</div>
<div class="cell" style="left:638.9px;top:557px;width:96.5px;letter-spacing:0.4px">16/9/2025</div>
<div class="cell" style="left:743.9px;top:557px;width:87.3px;letter-spacing:0.4px">16/9/2025</div>
<div class="cell" style="left:831.2px;top:557px;width:79.09999999999991px;text-align:right">367,00</div>
<div class="cell" style="left:918.3px;top:557px;width:66.30000000000007px;text-align:right">0,00</div>
<div class="cell" style="left:992.6px;top:557px;width:71.89999999999998px;text-align:right">0,00</div>
<div class="cell" style="left:1072.5px;top:557px;width:74.09999999999991px;text-align:right">0,00</div>
<div class="cell" style="left:1154.6px;top:557px;width:73.80000000000018px;text-align:right">0,00</div>
<div class="cell" style="left:1236.4px;top:557px;width:81.0px;text-align:right">367,00</div>
<div class="cell" style="left:1325.4px;top:557px;width:56.899999999999864px;text-align:right">0,00</div>
<div class="cell" style="left:1398.8px;top:557px;width:54.6px">0</div>
<div class="a" style="left:21px;top:591px;width:1747px;height:34px;background:#ffffff;border-left:1px solid #dedede"></div>
<div class="cell" style="left:59px;top:591px;width:79.4px">A</div>
<div class="cell" style="left:146.9px;top:591px;width:113.6px">1488600000156</div>
<div class="cell" style="left:269.0px;top:591px;width:74.4px">B</div>
<div class="cell" style="left:351.9px;top:591px;width:65.6px">NF</div>
<div class="cell" style="left:426.0px;top:591px;width:109.5px">- Modalidad FKS</div>
<div class="cell" style="left:544.0px;top:591px;width:86.4px;letter-spacing:0.4px">18/8/2025</div>
<div class="cell" style="left:638.9px;top:591px;width:96.5px;letter-spacing:0.4px">16/10/2025</div>
<div class="cell" style="left:743.9px;top:591px;width:87.3px;letter-spacing:0.4px">16/10/2025</div>
<div class="cell" style="left:831.2px;top:591px;width:79.09999999999991px;text-align:right">367,00</div>
<div class="cell" style="left:918.3px;top:591px;width:66.30000000000007px;text-align:right">0,00</div>
<div class="cell" style="left:992.6px;top:591px;width:71.89999999999998px;text-align:right">0,00</div>
<div class="cell" style="left:1072.5px;top:591px;width:74.09999999999991px;text-align:right">0,00</div>
<div class="cell" style="left:1154.6px;top:591px;width:73.80000000000018px;text-align:right">0,00</div>
<div class="cell" style="left:1236.4px;top:591px;width:81.0px;text-align:right">367,00</div>
<div class="cell" style="left:1325.4px;top:591px;width:56.899999999999864px;text-align:right">0,00</div>
<div class="cell" style="left:1398.8px;top:591px;width:54.6px">0</div>
<div class="a" style="left:21px;top:625px;width:1747px;height:34px;background:#f2f2f2;border-left:1px solid #dedede"></div>
<div class="cell" style="left:59px;top:625px;width:79.4px">A</div>
<div class="cell" style="left:146.9px;top:625px;width:113.6px">1488600000156</div>
<div class="cell" style="left:269.0px;top:625px;width:74.4px">C</div>
<div class="cell" style="left:351.9px;top:625px;width:65.6px">NF</div>
<div class="cell" style="left:426.0px;top:625px;width:109.5px">- Modalidad FKS</div>
<div class="cell" style="left:544.0px;top:625px;width:86.4px;letter-spacing:0.4px">18/8/2025</div>
<div class="cell" style="left:638.9px;top:625px;width:96.5px;letter-spacing:0.4px">15/11/2025</div>
<div class="cell" style="left:743.9px;top:625px;width:87.3px;letter-spacing:0.4px">17/11/2025</div>
<div class="cell" style="left:831.2px;top:625px;width:79.09999999999991px;text-align:right">366,00</div>
<div class="cell" style="left:918.3px;top:625px;width:66.30000000000007px;text-align:right">0,00</div>
<div class="cell" style="left:992.6px;top:625px;width:71.89999999999998px;text-align:right">0,00</div>
<div class="cell" style="left:1072.5px;top:625px;width:74.09999999999991px;text-align:right">0,00</div>
<div class="cell" style="left:1154.6px;top:625px;width:73.80000000000018px;text-align:right">0,00</div>
<div class="cell" style="left:1236.4px;top:625px;width:81.0px;text-align:right">366,00</div>
<div class="cell" style="left:1325.4px;top:625px;width:56.899999999999864px;text-align:right">0,00</div>
<div class="cell" style="left:1398.8px;top:625px;width:54.6px">0</div>
<div class="a" style="left:21px;top:659px;width:1747px;height:34px;background:#ffffff;border-left:1px solid #dedede"></div>
<div class="cell" style="left:59px;top:659px;width:79.4px">A</div>
<div class="cell" style="left:146.9px;top:659px;width:113.6px">1488600000157</div>
<div class="cell" style="left:269.0px;top:659px;width:74.4px">A</div>
<div class="cell" style="left:351.9px;top:659px;width:65.6px">NF</div>
<div class="cell" style="left:426.0px;top:659px;width:109.5px">- Modalidad FKS</div>
<div class="cell" style="left:544.0px;top:659px;width:86.4px;letter-spacing:0.4px">18/8/2025</div>
<div class="cell" style="left:638.9px;top:659px;width:96.5px;letter-spacing:0.4px">16/9/2025</div>
<div class="cell" style="left:743.9px;top:659px;width:87.3px;letter-spacing:0.4px">16/9/2025</div>
<div class="cell" style="left:831.2px;top:659px;width:79.09999999999991px;text-align:right">367,00</div>
<div class="cell" style="left:918.3px;top:659px;width:66.30000000000007px;text-align:right">0,00</div>
<div class="cell" style="left:992.6px;top:659px;width:71.89999999999998px;text-align:right">0,00</div>
<div class="cell" style="left:1072.5px;top:659px;width:74.09999999999991px;text-align:right">0,00</div>
<div class="cell" style="left:1154.6px;top:659px;width:73.80000000000018px;text-align:right">0,00</div>
<div class="cell" style="left:1236.4px;top:659px;width:81.0px;text-align:right">367,00</div>
<div class="cell" style="left:1325.4px;top:659px;width:56.899999999999864px;text-align:right">0,00</div>
<div class="cell" style="left:1398.8px;top:659px;width:54.6px">0</div>
<div class="a" style="left:21px;top:693px;width:1747px;height:34px;background:#f2f2f2;border-left:1px solid #dedede"></div>
<div class="cell" style="left:59px;top:693px;width:79.4px">A</div>
<div class="cell" style="left:146.9px;top:693px;width:113.6px">1488600000157</div>
<div class="cell" style="left:269.0px;top:693px;width:74.4px">B</div>
<div class="cell" style="left:351.9px;top:693px;width:65.6px">NF</div>
<div class="cell" style="left:426.0px;top:693px;width:109.5px">- Modalidad FKS</div>
<div class="cell" style="left:544.0px;top:693px;width:86.4px;letter-spacing:0.4px">18/8/2025</div>
<div class="cell" style="left:638.9px;top:693px;width:96.5px;letter-spacing:0.4px">16/10/2025</div>
<div class="cell" style="left:743.9px;top:693px;width:87.3px;letter-spacing:0.4px">16/10/2025</div>
<div class="cell" style="left:831.2px;top:693px;width:79.09999999999991px;text-align:right">367,00</div>
<div class="cell" style="left:918.3px;top:693px;width:66.30000000000007px;text-align:right">0,00</div>
<div class="cell" style="left:992.6px;top:693px;width:71.89999999999998px;text-align:right">0,00</div>
<div class="cell" style="left:1072.5px;top:693px;width:74.09999999999991px;text-align:right">0,00</div>
<div class="cell" style="left:1154.6px;top:693px;width:73.80000000000018px;text-align:right">0,00</div>
<div class="cell" style="left:1236.4px;top:693px;width:81.0px;text-align:right">367,00</div>
<div class="cell" style="left:1325.4px;top:693px;width:56.899999999999864px;text-align:right">0,00</div>
<div class="cell" style="left:1398.8px;top:693px;width:54.6px">0</div>
<div class="a" style="left:21px;top:727px;width:1747px;height:34px;background:#ffffff;border-left:1px solid #dedede"></div>
<div class="cell" style="left:59px;top:727px;width:79.4px">A</div>
<div class="cell" style="left:146.9px;top:727px;width:113.6px">1488600000157</div>
<div class="cell" style="left:269.0px;top:727px;width:74.4px">C</div>
<div class="cell" style="left:351.9px;top:727px;width:65.6px">NF</div>
<div class="cell" style="left:426.0px;top:727px;width:109.5px">- Modalidad FKS</div>
<div class="cell" style="left:544.0px;top:727px;width:86.4px;letter-spacing:0.4px">18/8/2025</div>
<div class="cell" style="left:638.9px;top:727px;width:96.5px;letter-spacing:0.4px">15/11/2025</div>
<div class="cell" style="left:743.9px;top:727px;width:87.3px;letter-spacing:0.4px">17/11/2025</div>
<div class="cell" style="left:831.2px;top:727px;width:79.09999999999991px;text-align:right">366,00</div>
<div class="cell" style="left:918.3px;top:727px;width:66.30000000000007px;text-align:right">0,00</div>
<div class="cell" style="left:992.6px;top:727px;width:71.89999999999998px;text-align:right">0,00</div>
<div class="cell" style="left:1072.5px;top:727px;width:74.09999999999991px;text-align:right">0,00</div>
<div class="cell" style="left:1154.6px;top:727px;width:73.80000000000018px;text-align:right">0,00</div>
<div class="cell" style="left:1236.4px;top:727px;width:81.0px;text-align:right">366,00</div>
<div class="cell" style="left:1325.4px;top:727px;width:56.899999999999864px;text-align:right">0,00</div>
<div class="cell" style="left:1398.8px;top:727px;width:54.6px">0</div>
<div class="a" style="left:21px;top:761px;width:1747px;height:34px;background:#f2f2f2;border-left:1px solid #dedede"></div>
<div class="cell" style="left:59px;top:761px;width:79.4px">A</div>
<div class="cell" style="left:146.9px;top:761px;width:113.6px">1488600000158</div>
<div class="cell" style="left:351.9px;top:761px;width:65.6px">NCC</div>
<div class="cell" style="left:426.0px;top:761px;width:109.5px">- Modalidad FKS</div>
<div class="cell" style="left:544.0px;top:761px;width:86.4px;letter-spacing:0.4px">18/8/2025</div>
<div class="cell" style="left:638.9px;top:761px;width:96.5px;letter-spacing:0.4px">18/8/2025</div>
<div class="cell" style="left:743.9px;top:761px;width:87.3px;letter-spacing:0.4px">18/8/2025</div>
<div class="cell" style="left:831.2px;top:761px;width:79.09999999999991px;text-align:right">-3.300,00</div>
<div class="cell" style="left:918.3px;top:761px;width:66.30000000000007px;text-align:right">0,00</div>
<div class="cell" style="left:992.6px;top:761px;width:71.89999999999998px;text-align:right">0,00</div>
<div class="cell" style="left:1072.5px;top:761px;width:74.09999999999991px;text-align:right">0,00</div>
<div class="cell" style="left:1154.6px;top:761px;width:73.80000000000018px;text-align:right">0,00</div>
<div class="cell" style="left:1236.4px;top:761px;width:81.0px;text-align:right">-3.300,00</div>
<div class="cell" style="left:1325.4px;top:761px;width:56.899999999999864px;text-align:right">0,00</div>
<div class="cell" style="left:1398.8px;top:761px;width:54.6px">0</div>
<div class="cell" style="left:1461.9px;top:761px;width:304.1px">1488600000155, 1488600000156, 1488600000157</div>
<div class="vl" style="left:138px;top:319px;height:477px"></div>
<div class="vl" style="left:260px;top:319px;height:477px"></div>
<div class="vl" style="left:343px;top:319px;height:477px"></div>
<div class="vl" style="left:417px;top:319px;height:477px"></div>
<div class="vl" style="left:535px;top:319px;height:477px"></div>
<div class="vl" style="left:630px;top:319px;height:477px"></div>
<div class="vl" style="left:735px;top:319px;height:477px"></div>
<div class="vl" style="left:831px;top:319px;height:477px"></div>
<div class="vl" style="left:918px;top:319px;height:477px"></div>
<div class="vl" style="left:992px;top:319px;height:477px"></div>
<div class="vl" style="left:1072px;top:319px;height:477px"></div>
<div class="vl" style="left:1154px;top:319px;height:477px"></div>
<div class="vl" style="left:1236px;top:319px;height:477px"></div>
<div class="vl" style="left:1325px;top:319px;height:477px"></div>
<div class="vl" style="left:1390px;top:319px;height:477px"></div>
<div class="vl" style="left:1453px;top:319px;height:477px"></div>
<div class="a" style="left:1768px;top:290px;width:8px;height:505px;background:#0b5a92"></div>
<div class="a" style="left:21px;top:424px;width:1747.6px;height:28.6px;border:4.8px solid #de1f26"></div>
<div class="a" style="left:19px;top:766px;width:1751px;height:28.6px;border:4.7px solid #de1f26"></div>
<svg class="a" style="left:32px;top:809px" width="14" height="14" viewBox="0 0 15 14"><path d="M0 0H15V2.2L9.6 8V14H5.4V8L0 2.2Z" fill="#1b5a86"/></svg>
<div class="t" style="left:53px;top:807px;font-size:13.9px;color:#265a7e;line-height:18px">Crear filtro</div>
<div class="a" style="left:1796px;top:170px;width:50px;height:666px;background:#f2f2f2"></div>
<div class="a" style="left:1796px;top:170px;width:50px;height:48px;background:#0b5a92"></div>
<svg class="a" style="left:1810px;top:184px" width="22" height="21" viewBox="0 0 22 21"><path d="M1 2H21L13 10.8V19.5H9V10.8Z" fill="none" stroke="#fff" stroke-width="2" stroke-linejoin="miter"/></svg>
<svg class="a" style="left:1811px;top:230px" width="20" height="24" viewBox="0 0 20 24"><path d="M6 5.2H3Q2.6 5.2 2.6 5.6V22Q2.6 22.2 3 22.2H17Q17.4 22.2 17.4 22V5.6Q17.4 5.2 17 5.2H14" fill="none" stroke="#1b5a86" stroke-width="2"/><path d="M6.2 7V5Q6.2 4.6 6.8 4.6H8.2Q8.6 1 10.5 1Q12.4 1 12.8 4.6H14.2Q14.8 4.6 14.8 5V7Z" fill="#1b5a86"/><circle cx="10.5" cy="4" r="1" fill="#f2f2f2"/><path d="M6.4 9H14.6M6.4 13.8H14.6M6.4 18H14.6" stroke="#1b5a86" stroke-width="1.8"/></svg>
<svg class="a" style="left:1808px;top:278px" width="26" height="21" viewBox="0 0 26 21"><path d="M5.5 1Q2.8 1 2.8 3.5V8Q2.8 10.5 0.8 10.5Q2.8 10.5 2.8 13V17.5Q2.8 20 5.5 20" fill="none" stroke="#1b5a86" stroke-width="1.9"/><path d="M19.5 1Q22.2 1 22.2 3.5V8Q22.2 10.5 24.2 10.5Q22.2 10.5 22.2 13V17.5Q22.2 20 19.5 20" fill="none" stroke="#1b5a86" stroke-width="1.9"/><ellipse cx="12.5" cy="10.5" rx="3.4" ry="5.6" fill="none" stroke="#1b5a86" stroke-width="2.2"/><path d="M10.3 13.5L14.7 7.5" stroke="#1b5a86" stroke-width="1.8"/></svg>
<svg class="a" style="left:1809px;top:327px" width="25" height="18" viewBox="0 0 25 18"><path d="M1.5 9Q12.5 -3 23.5 9Q12.5 21 1.5 9Z" fill="none" stroke="#1b5a86" stroke-width="2"/><circle cx="12.5" cy="9" r="3.7" fill="none" stroke="#1b5a86" stroke-width="2"/></svg>
</body></html>
